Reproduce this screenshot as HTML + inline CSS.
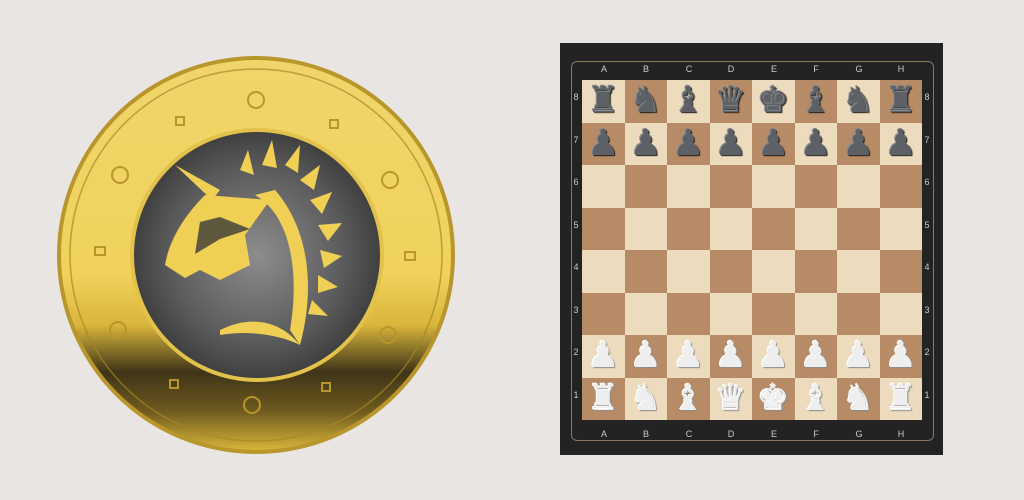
<!DOCTYPE html>
<html><head><style>
body{margin:0;width:1024px;height:500px;background:#e8e5e2;position:relative;overflow:hidden;font-family:"Liberation Sans",sans-serif}
#panel{position:absolute;left:560px;top:43px;width:383px;height:412px;background:#232323}
#frame{position:absolute;left:571px;top:61px;width:361px;height:378px;border:1px solid #8a7a5a;border-radius:6px}
#board{position:absolute;left:582px;top:80px;width:340px;height:340px;display:grid;grid-template-columns:repeat(8,42.5px);grid-template-rows:repeat(8,42.5px)}
.sq{display:flex;align-items:center;justify-content:center;font-size:36px;line-height:1;font-family:"DejaVu Sans",sans-serif}
.l{background:#ecdcbd}.d{background:#b68b66}
.b{color:#5d6064;text-shadow:-1px -1px 0 #8a8d92,1px 1px 1px #1a1a1a}
.w{color:#eeeeee;text-shadow:-1px -1px 0 #fff,1px 1px 1px #8a8a8a}
.lab{position:absolute;color:#ccc;font-size:9px;text-align:center;width:20px}
</style></head><body>
<svg width="1024" height="500" style="position:absolute;left:0;top:0">
<defs>
<linearGradient id="g" x1="0" y1="0" x2="0" y2="1">
<stop offset="0" stop-color="#f1d56a"/><stop offset="0.55" stop-color="#f0d25c"/><stop offset="0.68" stop-color="#d9b53c"/><stop offset="0.8" stop-color="#3e3418"/><stop offset="0.9" stop-color="#6e5a1e"/><stop offset="1" stop-color="#d8b43a"/></linearGradient>
<radialGradient id="s" cx="0.5" cy="0.5" r="0.6"><stop offset="0" stop-color="#8d8d8d"/><stop offset="0.6" stop-color="#5a5a5a"/><stop offset="1" stop-color="#2e2e2e"/></radialGradient>
</defs>
<circle cx="256" cy="255" r="199" fill="#b8962c"/>
<circle cx="256" cy="255" r="195" fill="url(#g)"/>
<circle cx="256" cy="255" r="186" fill="none" stroke="#a78626" stroke-width="1.5" opacity="0.7"/>
<circle cx="257" cy="255" r="127" fill="#e2c24a"/>
<circle cx="257" cy="255" r="123" fill="url(#s)"/>
<g fill="none" stroke="#b8962c" stroke-width="2">
<circle cx="256" cy="100" r="8"/><circle cx="120" cy="175" r="8"/><circle cx="390" cy="180" r="8"/><circle cx="118" cy="330" r="8"/><circle cx="388" cy="335" r="8"/><circle cx="252" cy="405" r="8"/>
<rect x="176" y="117" width="8" height="8"/><rect x="330" y="120" width="8" height="8"/><rect x="95" y="247" width="10" height="8"/><rect x="405" y="252" width="10" height="8"/><rect x="170" y="380" width="8" height="8"/><rect x="322" y="383" width="8" height="8"/>
</g>
<g fill="#f0cf55">
<path d="M175 165 L220 190 L212 200Z"/>
<path d="M205 195 C190 210 170 235 165 265 L185 278 L200 270 L220 280 L250 265 L245 235 L270 200 Z"/>
<path d="M255 195 C290 215 300 270 290 330 L300 345 C315 290 310 230 275 190Z"/>
<path d="M220 330 C250 315 280 320 300 345 C280 335 250 330 220 335Z"/>
<path d="M240 170 l8 -20 l6 25Z M262 165 l10 -25 l5 28Z M285 165 l15 -20 l-2 28Z M300 180 l20 -15 l-6 25Z M310 200 l22 -8 l-10 22Z M318 225 l24 -2 l-14 18Z M320 250 l22 6 l-18 12Z M318 275 l20 12 l-20 6Z M312 300 l16 16 l-20 -2Z"/>
</g>
<g fill="#3a3a3a"><path d="M200 222 l20 -5 l30 12 l-30 10 l-25 15z" opacity="0.8"/></g>
</svg>
<div id="panel"></div>
<div id="frame"></div>
<div id="board">
<div class="sq l b">♜</div><div class="sq d b">♞</div><div class="sq l b">♝</div><div class="sq d b">♛</div><div class="sq l b">♚</div><div class="sq d b">♝</div><div class="sq l b">♞</div><div class="sq d b">♜</div>
<div class="sq d b">♟</div><div class="sq l b">♟</div><div class="sq d b">♟</div><div class="sq l b">♟</div><div class="sq d b">♟</div><div class="sq l b">♟</div><div class="sq d b">♟</div><div class="sq l b">♟</div>
<div class="sq l"></div><div class="sq d"></div><div class="sq l"></div><div class="sq d"></div><div class="sq l"></div><div class="sq d"></div><div class="sq l"></div><div class="sq d"></div>
<div class="sq d"></div><div class="sq l"></div><div class="sq d"></div><div class="sq l"></div><div class="sq d"></div><div class="sq l"></div><div class="sq d"></div><div class="sq l"></div>
<div class="sq l"></div><div class="sq d"></div><div class="sq l"></div><div class="sq d"></div><div class="sq l"></div><div class="sq d"></div><div class="sq l"></div><div class="sq d"></div>
<div class="sq d"></div><div class="sq l"></div><div class="sq d"></div><div class="sq l"></div><div class="sq d"></div><div class="sq l"></div><div class="sq d"></div><div class="sq l"></div>
<div class="sq l w">♟</div><div class="sq d w">♟</div><div class="sq l w">♟</div><div class="sq d w">♟</div><div class="sq l w">♟</div><div class="sq d w">♟</div><div class="sq l w">♟</div><div class="sq d w">♟</div>
<div class="sq d w">♜</div><div class="sq l w">♞</div><div class="sq d w">♝</div><div class="sq l w">♛</div><div class="sq d w">♚</div><div class="sq l w">♝</div><div class="sq d w">♞</div><div class="sq l w">♜</div>
</div>
<div class="lab" style="left:594px;top:64px">A</div><div class="lab" style="left:636px;top:64px">B</div><div class="lab" style="left:679px;top:64px">C</div><div class="lab" style="left:721px;top:64px">D</div><div class="lab" style="left:764px;top:64px">E</div><div class="lab" style="left:806px;top:64px">F</div><div class="lab" style="left:849px;top:64px">G</div><div class="lab" style="left:891px;top:64px">H</div>
<div class="lab" style="left:594px;top:429px">A</div><div class="lab" style="left:636px;top:429px">B</div><div class="lab" style="left:679px;top:429px">C</div><div class="lab" style="left:721px;top:429px">D</div><div class="lab" style="left:764px;top:429px">E</div><div class="lab" style="left:806px;top:429px">F</div><div class="lab" style="left:849px;top:429px">G</div><div class="lab" style="left:891px;top:429px">H</div>
<div class="lab" style="left:566px;top:92px">8</div><div class="lab" style="left:566px;top:135px">7</div><div class="lab" style="left:566px;top:177px">6</div><div class="lab" style="left:566px;top:220px">5</div><div class="lab" style="left:566px;top:262px">4</div><div class="lab" style="left:566px;top:305px">3</div><div class="lab" style="left:566px;top:347px">2</div><div class="lab" style="left:566px;top:390px">1</div>
<div class="lab" style="left:917px;top:92px">8</div><div class="lab" style="left:917px;top:135px">7</div><div class="lab" style="left:917px;top:177px">6</div><div class="lab" style="left:917px;top:220px">5</div><div class="lab" style="left:917px;top:262px">4</div><div class="lab" style="left:917px;top:305px">3</div><div class="lab" style="left:917px;top:347px">2</div><div class="lab" style="left:917px;top:390px">1</div>
</body></html>
